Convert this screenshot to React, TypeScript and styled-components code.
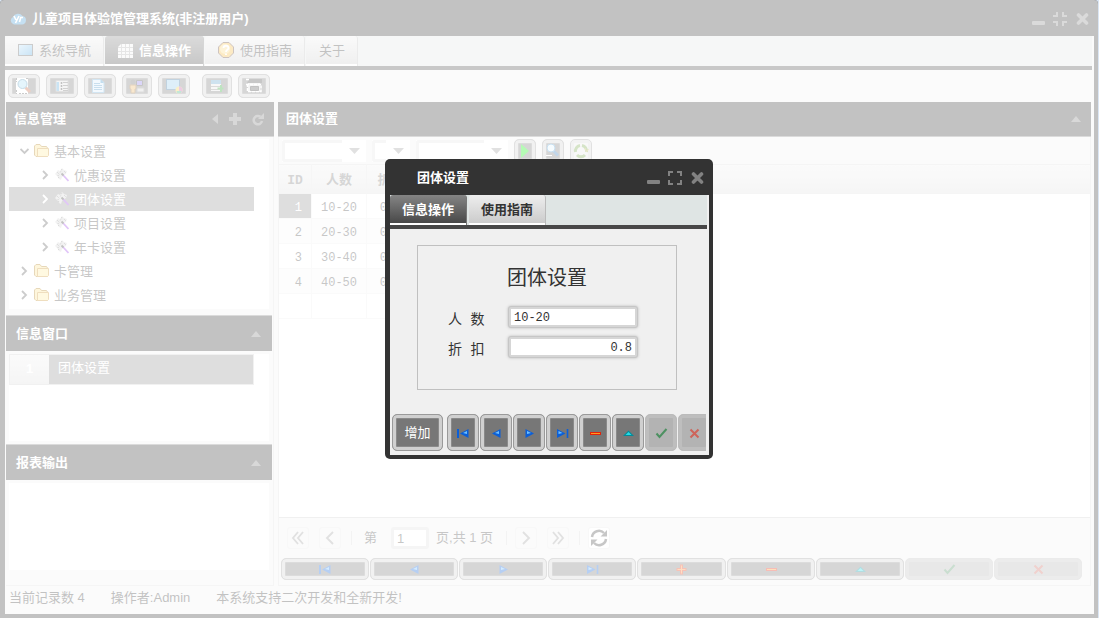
import React from "react";
import styled, { createGlobalStyle, css } from "styled-components";

const sans = `"Liberation Sans", "Noto Sans CJK SC", sans-serif`;
const mono = `"Liberation Mono", "Noto Sans CJK SC", monospace`;

const GlobalStyle = createGlobalStyle`
  *, *::before, *::after { box-sizing: border-box; }
  body { margin: 0; background: #dbe6f4; font: 13px/18px ${sans}; color: #333; }
  button, input, select { font: inherit; color: inherit; margin: 0; }
  button { padding: 0; cursor: pointer; }
  h1, h2, h3 { margin: 0; font-size: 13px; font-weight: 700; }
  ul { margin: 0; padding: 0; list-style: none; }
  svg { display: block; flex: none; }
`;

/* ---------- window frame ---------- */

const Window = styled.div`
  position: relative;
  display: flex;
  flex-direction: column;
  min-height: 100vh;
  margin-right: 1px;
  background: #333;
  border-radius: 4px 4px 0 0;
  overflow: hidden;
`;

const TitleBar = styled.header`
  display: flex;
  align-items: center;
  gap: 6px;
  height: 36px;
  padding: 2px 9px 0 10px;
  color: #fff;
`;

const WindowTitle = styled.h1`
  flex: 1;
`;

const WindowTools = styled.div`
  display: flex;
  align-items: center;
  gap: 8px;
`;

const PlainButton = styled.button`
  display: flex;
  border: 0;
  background: none;
  color: #828282;
`;

const WindowBody = styled.div`
  flex: 1;
  display: flex;
  flex-direction: column;
  margin: 0 4px 4px 5px;
  background: #f0f0f0;
`;

const TabBar = styled.nav`
  display: flex;
  gap: 1px;
  margin-right: 2px;
  background: #dfe5e4;
  border-bottom: 4px solid #474747;
`;

const Tab = styled.button<{ $active?: boolean; $strong?: boolean }>`
  display: flex;
  align-items: center;
  gap: 6px;
  height: 30px;
  padding: 0 12px 0 13px;
  border: 0;
  border-right: 1px solid #bbb;
  border-radius: 3px 3px 0 0;
  background: linear-gradient(#eee, #c9c9c9);
  box-shadow: inset 0 -3px 0 -1px #fff;
  color: #333;
  ${(p) =>
    p.$active &&
    css`
      background: linear-gradient(#858585, #444);
      border-color: #777;
      color: #fff;
      font-weight: 700;
    `}
  ${(p) =>
    p.$strong &&
    css`
      padding: 0 12px;
      font-weight: 700;
    `}
`;

/* ---------- buttons ---------- */

const RaisedButton = styled.button<{ $width?: number; $height?: number; $light?: boolean }>`
  display: flex;
  align-items: center;
  justify-content: center;
  flex: ${(p) => (p.$width ? `0 0 ${p.$width}px` : "1")};
  height: ${(p) => p.$height ?? 24}px;
  border: 1px solid #9a9a9a;
  border-radius: 5px;
  background: ${(p) => (p.$light ? "#e6e6e6" : "#777")};
  box-shadow: ${(p) =>
    p.$light ? "inset 0 0 0 3px #d8d8d8" : "inset 0 0 0 3px #d0d0d0, inset 0 0 0 4px #8a8a8a"};
  color: #fff;
  &:disabled {
    border-color: #bbb;
    background: #b3b3b3;
    box-shadow: inset 0 0 0 3px #bebebe;
  }
  &:disabled svg {
    opacity: 0.6;
  }
`;

const Toolbar = styled.div`
  display: flex;
  gap: 6px;
  height: 32px;
  padding: 4px 3px;
`;

const ToolGap = styled.span`
  width: 0;
`;

/* ---------- panels ---------- */

const Workspace = styled.div`
  flex: 1;
  display: flex;
  gap: 4px;
  padding: 0 3px 0 1px;
`;

const Sidebar = styled.aside`
  flex: 0 0 268px;
  border: solid #ddd;
  border-width: 0 1px 1px 0;
`;

const PanelHeader = styled.div<{ $inset?: boolean }>`
  display: flex;
  align-items: center;
  justify-content: space-between;
  height: ${(p) => (p.$inset ? 36 : 35)}px;
  margin-right: ${(p) => (p.$inset ? 1 : -1)}px;
  padding: 0 ${(p) => (p.$inset ? 11 : 10)}px 0 ${(p) => (p.$inset ? 10 : 8)}px;
  background: #333;
  border: solid #888;
  border-width: ${(p) => (p.$inset ? "1px 0 0" : "0 0 1px")};
  color: #fff;
`;

const HeaderTools = styled.div`
  display: flex;
  align-items: center;
  gap: 11px;
  color: #7d7d7d;
`;

const PanelBody = styled.div<{ $height: number }>`
  min-height: ${(p) => p.$height}px;
  margin: 3px 4px 3px 3px;
  background: #fff;
`;

const TreeBody = styled(PanelBody)`
  margin: 2px 4px 6px 3px;
`;

const TreeRow = styled.li<{ $level: number; $selected?: boolean }>`
  display: flex;
  align-items: center;
  gap: 5px;
  height: 24px;
  margin-right: 15px;
  padding-left: ${(p) => (p.$level === 1 ? 11 : 32)}px;
  color: ${(p) => (p.$selected ? "#fff" : "#444")};
  background: ${(p) => (p.$selected ? "#8f8f8f" : "none")};
`;

const TreeLabel = styled.span`
  padding-top: 2px;
`;

const OpenItem = styled.li`
  display: flex;
  height: 31px;
  margin-right: 15px;
  border: 1px solid #d0d0d0;
  background: #8f8f8f;
  color: #fff;
`;

const OpenItemIndex = styled.span`
  width: 39px;
  background: linear-gradient(#f0f0f0, #ddd);
  text-align: center;
  font-weight: 700;
  line-height: 28px;
`;

const OpenItemName = styled.span`
  padding-left: 9px;
  line-height: 26px;
`;

const Main = styled.main`
  flex: 1;
  display: flex;
  flex-direction: column;
  min-width: 0;
  border: solid #ddd;
  border-width: 0 1px 1px 1px;
`;

const MainHeader = styled(PanelHeader)`
  margin-left: -1px;
`;

const Filters = styled.form`
  display: flex;
  gap: 6px;
  height: 27px;
  padding: 2px 3px 0;
`;

const Combo = styled.span<{ $width: number }>`
  display: flex;
  align-items: center;
  width: ${(p) => p.$width}px;
  height: 22px;
  margin-top: 1px;
  background: #fff;
  color: #999;
`;

const ComboSelect = styled.select`
  flex: 1;
  min-width: 0;
  height: 22px;
  appearance: none;
  border: 3px solid #e4e4e4;
  border-right: 0;
  border-radius: 3px 0 0 3px;
  background: #fff;
`;

const ComboArrow = styled.span`
  display: flex;
  justify-content: center;
  width: 24px;
`;

const GridArea = styled.div`
  flex: 1;
  background: #fff;
`;

const DataTable = styled.table`
  width: 100%;
  border-collapse: separate;
  border-spacing: 0;
  table-layout: fixed;
  font: 12px/18px ${mono};
  color: #444;
`;

const HeadCell = styled.th<{ $width?: number }>`
  width: ${(p) => (p.$width ? `${p.$width}px` : "auto")};
  height: 30px;
  padding: 3px 0 0;
  border: solid #ddd;
  border-width: 1px 0 1px 0;
  border-right: ${(p) => (p.$width ? "1px solid #e2e2e2" : "0")};
  background: linear-gradient(#f0f0f0, #e0e0e0);
  color: #777;
  font-size: 13px;
  font-weight: 700;
`;

const Cell = styled.td<{ $stripe?: boolean; $selected?: boolean; $index?: boolean }>`
  height: 25px;
  padding: 4px ${(p) => (p.$index ? 9 : 0)}px 0 0;
  border: solid #efefef;
  border-width: 0 1px 1px 0;
  text-align: ${(p) => (p.$index ? "right" : "center")};
  background: ${(p) => (p.$selected ? "#8f8f8f" : p.$stripe ? "#f8f8f8" : "#fff")};
  ${(p) => p.$selected && "color: #fff;"}
`;

const Pager = styled.div`
  display: flex;
  align-items: center;
  height: 41px;
  padding-left: 8px;
  border-top: 1px solid #ccc;
  color: #444;
`;

const PagerButton = styled.button`
  display: flex;
  align-items: center;
  justify-content: center;
  width: 22px;
  height: 22px;
  margin-right: 10px;
  border: 1px solid #e6e6e6;
  border-radius: 3px;
  background: #f0f0f0;
  color: #999;
`;

const RefreshButton = styled(PagerButton)`
  color: #444;
  background: #fff;
`;

const Divider = styled.span`
  width: 1px;
  height: 14px;
  margin-right: 8px;
  background: #d8d8d8;
`;

const PageLabel = styled.label`
  display: flex;
  align-items: center;
  gap: 14px;
  margin: 0 7px 0 4px;
`;

const PageInput = styled.input`
  width: 38px;
  height: 22px;
  padding: 0 3px;
  border: 3px solid #dcdcdc;
  border-radius: 3px;
  background: #fff;
`;

const PageTotal = styled.span`
  margin-right: 13px;
`;

const RecordBar = styled.div`
  display: flex;
  gap: 1px;
  padding: 0 8px 5px 2px;
`;

const StatusBar = styled.footer`
  display: flex;
  gap: 26px;
  height: 28px;
  padding-left: 4px;
  line-height: 23px;
`;

const StatusItem = styled.span`
  white-space: nowrap;
`;

/* ---------- modal dialog ---------- */

const Mask = styled.div`
  position: absolute;
  inset: 0;
  display: grid;
  place-items: center;
  background: rgba(255, 255, 255, 0.7);
`;

const Dialog = styled.section`
  width: 328px;
  background: #333;
  border-radius: 5px;
  padding: 0 4px 4px 5px;
`;

const DialogTitle = styled.div`
  display: flex;
  align-items: center;
  justify-content: space-between;
  height: 36px;
  padding: 2px 5px 0 27px;
  color: #fff;
`;

const DialogBody = styled.div`
  padding: 0 2px 4px 0;
  background: #f0f0f0;
`;

const DialogTabs = styled(TabBar)`
  margin: 0;
  gap: 2px;
  height: 34px;
`;

const FormFrame = styled.form`
  display: grid;
  gap: 8px;
  margin: 16px 30px 24px 27px;
  padding: 20px 30px 31px;
  border: 1px solid #c0c0c0;
`;

const FormTitle = styled.h3`
  margin-bottom: 8px;
  text-align: center;
  font-size: 20px;
  font-weight: 400;
  line-height: 24px;
`;

const Field = styled.label`
  display: flex;
  align-items: center;
  justify-content: space-between;
  height: 22px;
  font: 14px/22px ${mono};
`;

const FieldName = styled.span`
  padding-top: 5px;
`;

const FieldInput = styled.input<{ $number?: boolean }>`
  width: 130px;
  height: 22px;
  margin-right: 8px;
  padding: 1px 3px 0;
  border: 3px solid #d6d6d6;
  border-radius: 3px;
  outline: 1px solid #c6c6c6;
  outline-offset: -1px;
  background: #fff;
  box-shadow: 0 0 3px #bbb;
  font-size: 12px;
  text-align: ${(p) => (p.$number ? "right" : "left")};
`;

const DialogActions = styled.div`
  display: flex;
  gap: 1px;
  margin: 0 1px 0 2px;
  overflow: hidden;
`;

const AddButton = styled(RaisedButton)`
  margin-right: 3px;
`;

/* ---------- icons ---------- */

const Minimize = () => (
  <svg width="14" height="14" viewBox="0 0 14 14"><rect x="1" y="9" width="13" height="4" rx="1" fill="currentColor" /></svg>
);
const Compress = () => (
  <svg width="14" height="14" viewBox="0 0 14 14" fill="none" stroke="currentColor" strokeWidth="2">
    <path d="M0 4h4V0M10 0v4h4M0 10h4v4M14 10h-4v4" />
  </svg>
);
const Expand = () => (
  <svg width="14" height="14" viewBox="0 0 14 14" fill="none" stroke="currentColor" strokeWidth="2">
    <path d="M0 1h5M1 0v5M9 1h5M13 0v5M0 13h5M1 9v5M9 13h5M13 9v5" />
  </svg>
);
const Close = () => (
  <svg width="14" height="14" viewBox="0 0 14 14" stroke="currentColor" strokeWidth="3.6" strokeLinecap="round"><path d="M3.500 3l8 8M11.500 3l-8 8" /></svg>
);
const Up = () => (
  <svg width="10" height="6" viewBox="0 0 10 6"><path d="M0 6l5-6 5 6z" fill="currentColor" /></svg>
);
const Down = () => (
  <svg width="11" height="6" viewBox="0 0 11 6"><path d="M0 0h11L5.500 6z" fill="currentColor" /></svg>
);
const Left = () => (
  <svg width="6" height="10" viewBox="0 0 6 10"><path d="M6 0v10L0 5z" fill="currentColor" /></svg>
);
const Plus = () => (
  <svg width="12" height="12" viewBox="0 0 12 12" stroke="currentColor" strokeWidth="4"><path d="M6 0v12M0 6h12" /></svg>
);
const Reload = () => (
  <svg width="12" height="13" viewBox="0 0 12 13" fill="none" stroke="currentColor" strokeWidth="2.500">
    <path d="M8.500 3.800A4.200 4.200 0 1 0 10 8" />
    <path d="M12 0v6H6z" fill="currentColor" stroke="none" />
  </svg>
);
const CloudLogo = () => (
  <svg width="16" height="14" viewBox="0 0 16 14">
    <path d="M4 12.500a4 4 0 0 1-1-7.500A5.500 5.500 0 0 1 12.500 4a4.300 4.300 0 0 1-.5 8.500z" fill="#3f97d2" />
    <path d="M4 4l2 4M9 4L5.500 11M9.500 10l1.200-4.500H13" fill="none" stroke="#fff" strokeWidth="1.600" />
  </svg>
);
const Screen = () => (
  <svg width="15" height="14" viewBox="0 0 15 14">
    <defs><linearGradient id="scr" x1="0" y1="0" x2="1" y2="1"><stop stopColor="#bfe3fa" /><stop offset="1" stopColor="#4da3dd" /></linearGradient></defs>
    <rect x="0.500" y="0.500" width="14" height="11" fill="url(#scr)" stroke="#555" />
  </svg>
);
const GridIcon = () => (
  <svg width="15" height="14" viewBox="0 0 15 14">
    <path d="M3 0h12v14H0V3z" fill="#f0f0f0" />
    <path d="M3.500 0v14M7.500 0v14M11.500 0v14M0 3.500h15M0 7.500h15M0 10.500h15" stroke="#aaa" />
  </svg>
);
const Help = () => (
  <svg width="16" height="18" viewBox="0 0 16 18">
    <path d="M5 .5h6L15.500 5v6L11 15.500H5L.5 11V5z" fill="#f6b93a" stroke="#5b3a2c" />
    <circle cx="7" cy="7" r="5" fill="#fbd980" />
    <path d="M5.500 6c0-3 5-3 5 0 0 2-2.500 1.500-2.500 4M8 11.500v1.500" fill="none" stroke="#fff" strokeWidth="1.800" />
  </svg>
);
const Folder = () => (
  <svg width="15" height="15" viewBox="0 0 15 15">
    <path d="M.5 11V2L2 .5h4L7.500 2.500h5L13.500 4v8.500H2z" fill="#fae08a" stroke="#b07c18" />
    <path d="M3.500 12.500v-8h11v7l-1 1z" fill="#fdeb9c" stroke="#c8922a" />
  </svg>
);
const FormIcon = () => (
  <svg width="14" height="14" viewBox="0 0 14 14">
    <path d="M0 6l3-4 2 1 2-3 2 2 3 1-1 3-2 1-2 2-1 3-2-1-1-2z" fill="#d2d2d2" />
    <path d="M3 7l1 4M2 4l3 3M7 1l-2 4M9 3l2 2" stroke="#777" strokeDasharray="1 1" />
    <path d="M8 7l5.500 6" stroke="#9b3fe8" strokeWidth="1.800" />
    <path d="M6.500 5.500L8.500 7.500" stroke="#333" strokeWidth="1.800" />
  </svg>
);
const Chevron = ({ open, white }: { open?: boolean; white?: boolean }) => (
  <svg width="9" height="10" viewBox="0 0 9 10" fill="none" stroke={white ? "#fff" : "#555"} strokeWidth="1.800">
    <path d={open ? "M.5 3l4 4 4-4" : "M2 1l4 4-4 4"} />
  </svg>
);
const PreviewIcon = () => (
  <svg width="20" height="16" viewBox="0 0 20 16">
    <path d="M2 0h12v16H2z" fill="#fff" />
    <path d="M2.500 0v4M2.500 12v4M14 .5h-3M5 15.500h8" stroke="#555" strokeDasharray="2 1" fill="none" />
    <path d="M11.500 9.500l4.500 4.500" stroke="#c2603a" strokeWidth="3" />
    <circle cx="8.500" cy="6" r="4.500" fill="#a9dcf3" stroke="#3f87ae" />
  </svg>
);
const ListIcon = () => (
  <svg width="14" height="14" viewBox="0 0 14 14">
    <path d="M1 1.500h12v11H1z" fill="#ddd" stroke="#999" />
    <path d="M1.500 3h2.500v9H1.500z" fill="#4ea3da" />
    <path d="M6.500 3v9" stroke="#333" strokeWidth="1.500" strokeDasharray="2 1" />
    <path d="M8 3.500h5M8 6.500h5M8 9.500h5M8 11.500h5" stroke="#666" />
  </svg>
);
const DocIcon = () => (
  <svg width="16" height="14" viewBox="0 0 16 14">
    <path d="M.5.500h8l3.500 3v10H.5z" fill="#d5ecfb" stroke="#69a9d3" />
    <path d="M2 4.500h6M2 6.500h8M2 8.500h8M2 10.500h8" stroke="#4a93c6" />
    <path d="M8.500 0v4H12z" fill="#378fc8" />
  </svg>
);
const UserIcon = () => (
  <svg width="16" height="16" viewBox="0 0 16 16">
    <path d="M7.500 2.500h6v5h-6z" fill="#8576ea" stroke="#444" />
    <path d="M8 10h7v4H8z" fill="#ccc" stroke="#888" />
    <circle cx="4" cy="4" r="2.500" fill="#666" />
    <path d="M1 7h6v4H6v4H2v-4H1z" fill="#eab25c" stroke="#97682b" />
  </svg>
);
const ScreenColorIcon = () => (
  <svg width="17" height="15" viewBox="0 0 17 15">
    <rect x="0.500" y="0.500" width="13" height="10" fill="#92caec" stroke="#2f6a94" />
    <circle cx="13" cy="11" r="3.500" fill="#f0cc48" />
    <path d="M13 7.500a3.500 3.500 0 0 1 0 7z" fill="#c156a1" />
    <path d="M10.500 12a2.500 2.500 0 0 0 5 0z" fill="#38ae7b" />
  </svg>
);
const TableAddIcon = () => (
  <svg width="14" height="14" viewBox="0 0 14 14">
    <path d="M1 1h10v11H1z" fill="#e4e4e4" />
    <path d="M1 1h10v4H1z" fill="#5a9dca" />
    <path d="M1 7.500h10M1 10.500h10" stroke="#888" />
    <path d="M11 6v7M7.500 9.500h6" stroke="#26a32c" strokeWidth="2" />
  </svg>
);
const PrintIcon = () => (
  <svg width="18" height="16" viewBox="0 0 18 16">
    <path d="M4 1h13v4H2z" fill="#444" />
    <path d="M3 5h12v9H3z" fill="#ddd" />
    <path d="M1 1.500h3M1 6.500h15v7H2.500v-7" fill="none" stroke="#fff" strokeWidth="1.500" strokeDasharray="3 1" />
    <path d="M5.500 8.500h8v4h-8z" fill="#555" stroke="#333" />
  </svg>
);
const RunIcon = () => (
  <svg width="14" height="14" viewBox="0 0 14 14"><path d="M3 0l8 7-8 7z" fill="#08f008" /></svg>
);
const SearchIcon = () => (
  <svg width="16" height="16" viewBox="0 0 16 16">
    <path d="M8.500 8l4.500 4.500" stroke="#2f77b8" strokeWidth="3" />
    <circle cx="6" cy="5" r="4" fill="#dff3ff" stroke="#4796cd" />
    <path d="M1 12.500h6" stroke="#fff" />
  </svg>
);
const RecycleIcon = () => (
  <svg width="16" height="16" viewBox="0 0 16 16" fill="none" stroke="#74a545" strokeWidth="3">
    <path d="M2.500 9A5.500 5.500 0 0 1 7 2.500M9 2.500A5.500 5.500 0 0 1 13.500 9M12 12a5.500 5.500 0 0 1-8 0" />
    <path d="M12 5l1.500 4 2-3" stroke="#c4b34b" strokeWidth="1" />
  </svg>
);
const PageArrow = ({ double, back }: { double?: boolean; back?: boolean }) => (
  <svg width="14" height="14" viewBox="0 0 14 14" fill="none" stroke="currentColor" strokeWidth="1.800">
    <g transform={back ? "rotate(180 7 7)" : undefined}>
      <path d={double ? "M2 1l5 6-5 6M7 1l5 6-5 6" : "M4 1l6 6-6 6"} />
    </g>
  </svg>
);
const SyncIcon = () => (
  <svg width="18" height="18" viewBox="0 0 18 18" fill="none" stroke="currentColor" strokeWidth="2.500">
    <path d="M2 8a7 7 0 0 1 12-4M16 10a7 7 0 0 1-12 4" />
    <path d="M17 1v6.500h-6.500zM1 17v-6.500h6.500z" fill="currentColor" stroke="none" />
  </svg>
);

type Action = "first" | "prev" | "next" | "last" | "add" | "remove" | "edit" | "save" | "cancel";

const ActionIcon = ({ kind }: { kind: Action }) => (
  <svg width="14" height="12" viewBox="0 0 14 12">
    {kind === "first" && (
      <>
        <path d="M2 2v9" stroke="#0b5fd8" strokeWidth="2" />
        <path d="M12.500 2v9L4 6.500z" fill="#0b5fd8" />
        <path d="M11 4v3L7 6z" fill="#6fc0ff" />
      </>
    )}
    {kind === "prev" && (
      <>
        <path d="M11.500 2v9L3 6.500z" fill="#0b5fd8" />
        <path d="M10 4v3L6 6z" fill="#6fc0ff" />
      </>
    )}
    {kind === "next" && (
      <>
        <path d="M3.500 2v9L12 6.500z" fill="#0b5fd8" />
        <path d="M5 4v3l4-1z" fill="#6fc0ff" />
      </>
    )}
    {kind === "last" && (
      <>
        <path d="M2 2v9l8.500-4.500z" fill="#0b5fd8" />
        <path d="M3.500 4v3l4-1z" fill="#6fc0ff" />
        <path d="M12.500 2v9" stroke="#0b5fd8" strokeWidth="1.600" />
      </>
    )}
    {kind === "add" && (
      <>
        <path d="M7.500 1.500v10M2.500 6.500h10" stroke="#e2330a" strokeWidth="3" />
        <path d="M7.500 2.500v8M3.500 6.500h8" stroke="#ff9238" />
      </>
    )}
    {kind === "remove" && (
      <>
        <path d="M2 6.500h11" stroke="#e2220a" strokeWidth="3" />
        <path d="M3 6.500h9" stroke="#ff9a20" />
      </>
    )}
    {kind === "edit" && (
      <>
        <path d="M2 9h11L7.500 3.500z" fill="#058a98" />
        <path d="M4.500 8h6l-3-3z" fill="#25dbe6" />
      </>
    )}
    {kind === "save" && <path d="M2.500 6.500l3 3.500L12.500 2" fill="none" stroke="#0a7b2c" strokeWidth="2" />}
    {kind === "cancel" && <path d="M3.500 2.500l8 8M11.500 2.500l-8 8" stroke="#e03020" strokeWidth="2" />}
  </svg>
);

/* ---------- data ---------- */

const toolbarItems = [
  { label: "预览", width: 32, icon: <PreviewIcon /> },
  { label: "列表", width: 32, icon: <ListIcon /> },
  { label: "文档", width: 32, icon: <DocIcon /> },
  { label: "用户", width: 30, icon: <UserIcon /> },
  { label: "界面", width: 32, icon: <ScreenColorIcon />, gapAfter: true },
  { label: "新增表", width: 30, icon: <TableAddIcon /> },
  { label: "打印", width: 32, icon: <PrintIcon /> },
];

const tree = [
  { name: "基本设置", level: 1, open: true },
  { name: "优惠设置", level: 2 },
  { name: "团体设置", level: 2, selected: true },
  { name: "项目设置", level: 2 },
  { name: "年卡设置", level: 2 },
  { name: "卡管理", level: 1 },
  { name: "业务管理", level: 1 },
];

const groups = [
  { id: "1", size: "10-20", discount: "0.8" },
  { id: "2", size: "20-30", discount: "0.7" },
  { id: "3", size: "30-40", discount: "0.6" },
  { id: "4", size: "40-50", discount: "0.5" },
  { id: "", size: "", discount: "" },
];

const actions: { kind: Action; label: string; disabled?: boolean }[] = [
  { kind: "first", label: "首条" },
  { kind: "prev", label: "上一条" },
  { kind: "next", label: "下一条" },
  { kind: "last", label: "末条" },
  { kind: "add", label: "增加" },
  { kind: "remove", label: "删除" },
  { kind: "edit", label: "修改" },
  { kind: "save", label: "保存", disabled: true },
  { kind: "cancel", label: "取消", disabled: true },
];

/* ---------- sections ---------- */

const SidePanels = () => (
  <Sidebar>
    <PanelHeader>
      <h2>信息管理</h2>
      <HeaderTools>
        <Left />
        <Plus />
        <Reload />
      </HeaderTools>
    </PanelHeader>
    <TreeBody $height={170}>
      <ul>
        {tree.map((node) => (
          <TreeRow key={node.name} $level={node.level} $selected={node.selected}>
            <Chevron open={node.open} white={node.selected} />
            {node.level === 1 ? <Folder /> : <FormIcon />}
            <TreeLabel>{node.name}</TreeLabel>
          </TreeRow>
        ))}
      </ul>
    </TreeBody>
    <PanelHeader $inset>
      <h2>信息窗口</h2>
      <HeaderTools><Up /></HeaderTools>
    </PanelHeader>
    <PanelBody $height={87}>
      <ul>
        <OpenItem>
          <OpenItemIndex>1</OpenItemIndex>
          <OpenItemName>团体设置</OpenItemName>
        </OpenItem>
      </ul>
    </PanelBody>
    <PanelHeader $inset>
      <h2>报表输出</h2>
      <HeaderTools><Up /></HeaderTools>
    </PanelHeader>
    <PanelBody $height={87} />
  </Sidebar>
);

const GroupPanel = () => (
  <Main>
    <MainHeader>
      <h2>团体设置</h2>
      <HeaderTools><Up /></HeaderTools>
    </MainHeader>
    <Filters onSubmit={(e) => e.preventDefault()}>
      {[
        { label: "字段", width: 84 },
        { label: "条件", width: 38 },
        { label: "值", width: 92 },
      ].map((combo) => (
        <Combo key={combo.label} $width={combo.width}>
          <ComboSelect aria-label={combo.label} />
          <ComboArrow><Down /></ComboArrow>
        </Combo>
      ))}
      <RaisedButton $width={22} aria-label="执行"><RunIcon /></RaisedButton>
      <RaisedButton $width={22} aria-label="查找"><SearchIcon /></RaisedButton>
      <RaisedButton $width={22} $light aria-label="刷新"><RecycleIcon /></RaisedButton>
    </Filters>
    <GridArea>
      <DataTable>
        <thead>
          <tr>
            <HeadCell $width={33}>ID</HeadCell>
            <HeadCell $width={55}>人数</HeadCell>
            <HeadCell $width={48}>折扣</HeadCell>
            <HeadCell />
          </tr>
        </thead>
        <tbody>
          {groups.map((row, i) => (
            <tr key={i}>
              <Cell $index $selected={i === 0} $stripe={i % 2 === 1}>{row.id}</Cell>
              <Cell $stripe={i % 2 === 1}>{row.size}</Cell>
              <Cell $stripe={i % 2 === 1}>{row.discount}</Cell>
            </tr>
          ))}
        </tbody>
      </DataTable>
    </GridArea>
    <Pager>
      <PagerButton aria-label="首页"><PageArrow double back /></PagerButton>
      <PagerButton aria-label="上一页"><PageArrow back /></PagerButton>
      <Divider />
      <PageLabel>
        第
        <PageInput defaultValue="1" />
      </PageLabel>
      <PageTotal>页,共 1 页</PageTotal>
      <Divider />
      <PagerButton aria-label="下一页"><PageArrow /></PagerButton>
      <PagerButton aria-label="末页"><PageArrow double /></PagerButton>
      <Divider />
      <RefreshButton aria-label="刷新列表"><SyncIcon /></RefreshButton>
    </Pager>
    <RecordBar>
      {actions.map((a) => (
        <RaisedButton key={a.kind} $height={22} disabled={a.disabled} aria-label={a.label}>
          <ActionIcon kind={a.kind} />
        </RaisedButton>
      ))}
    </RecordBar>
  </Main>
);

const GroupDialog = () => (
  <Dialog role="dialog" aria-labelledby="dialog-title">
    <DialogTitle>
      <h2 id="dialog-title">团体设置</h2>
      <WindowTools>
        <PlainButton aria-label="最小化"><Minimize /></PlainButton>
        <PlainButton aria-label="最大化"><Expand /></PlainButton>
        <PlainButton aria-label="关闭"><Close /></PlainButton>
      </WindowTools>
    </DialogTitle>
    <DialogBody>
      <DialogTabs>
        <Tab $active $strong>信息操作</Tab>
        <Tab $strong>使用指南</Tab>
      </DialogTabs>
      <FormFrame onSubmit={(e) => e.preventDefault()}>
        <FormTitle>团体设置</FormTitle>
        <Field>
          <FieldName>人 数</FieldName>
          <FieldInput defaultValue="10-20" />
        </Field>
        <Field>
          <FieldName>折 扣</FieldName>
          <FieldInput $number defaultValue="0.8" />
        </Field>
      </FormFrame>
      <DialogActions>
        <AddButton $width={51} $height={37}>增加</AddButton>
        {actions
          .filter((a) => a.kind !== "add")
          .map((a) => (
            <RaisedButton key={a.kind} $width={32} $height={37} disabled={a.disabled} aria-label={a.label}>
              <ActionIcon kind={a.kind} />
            </RaisedButton>
          ))}
      </DialogActions>
    </DialogBody>
  </Dialog>
);

export default function App() {
  return (
    <>
      <GlobalStyle />
      <Window>
        <TitleBar>
          <CloudLogo />
          <WindowTitle>儿童项目体验馆管理系统(非注册用户)</WindowTitle>
          <WindowTools>
            <PlainButton aria-label="最小化窗口"><Minimize /></PlainButton>
            <PlainButton aria-label="还原窗口"><Compress /></PlainButton>
            <PlainButton aria-label="关闭窗口"><Close /></PlainButton>
          </WindowTools>
        </TitleBar>
        <WindowBody>
          <TabBar>
            <Tab><Screen />系统导航</Tab>
            <Tab $active><GridIcon />信息操作</Tab>
            <Tab><Help />使用指南</Tab>
            <Tab>关于</Tab>
          </TabBar>
          <Toolbar>
            {toolbarItems.map((item) => (
              <React.Fragment key={item.label}>
                <RaisedButton $width={item.width} aria-label={item.label}>{item.icon}</RaisedButton>
                {item.gapAfter && <ToolGap />}
              </React.Fragment>
            ))}
          </Toolbar>
          <Workspace>
            <SidePanels />
            <GroupPanel />
          </Workspace>
          <StatusBar>
            <StatusItem>当前记录数 4</StatusItem>
            <StatusItem>操作者:Admin</StatusItem>
            <StatusItem>本系统支持二次开发和全新开发!</StatusItem>
          </StatusBar>
        </WindowBody>
        <Mask>
          <GroupDialog />
        </Mask>
      </Window>
    </>
  );
}
